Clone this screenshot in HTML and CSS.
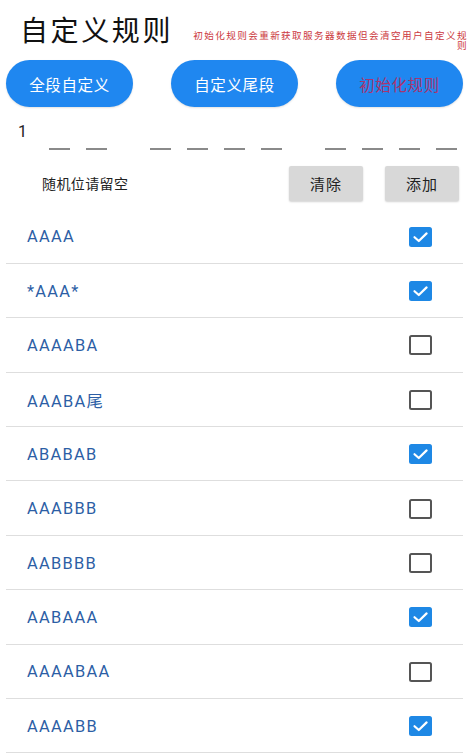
FILE: index.html
```html
<!DOCTYPE html>
<html lang="zh">
<head>
<meta charset="utf-8">
<link rel="stylesheet" href="styles.css">
</head>
<body>
<div class="page">
  <header class="header">
    <h1 class="title">自定义规则</h1>
    <p class="note">初始化规则会重新获取服务器数据但会清空用户自定义规则</p>
  </header>
  <div class="modes">
    <button class="pill">全段自定义</button>
    <button class="pill">自定义尾段</button>
    <button class="pill pill-reset">初始化规则</button>
  </div>
  <div class="digit">1</div>
  <div class="slots">
    <div class="group"><span class="dash"></span><span class="dash"></span></div>
    <div class="group"><span class="dash"></span><span class="dash"></span><span class="dash"></span><span class="dash"></span></div>
    <div class="group"><span class="dash"></span><span class="dash"></span><span class="dash"></span><span class="dash"></span></div>
  </div>
  <div class="actions">
    <span class="hint">随机位请留空</span>
    <div class="action-btns">
      <button class="gray-btn">清除</button>
      <button class="gray-btn">添加</button>
    </div>
  </div>
  <ul class="rules">
    <li class="rule"><span class="rule-name">AAAA</span><span class="box on"><svg viewBox="0 0 23 20" width="23" height="20"><path d="M5.5 10.2 L9.8 14 L17.6 6.4" fill="none" stroke="#fff" stroke-width="2.2" stroke-linecap="round" stroke-linejoin="round"/></svg></span></li>
    <li class="rule"><span class="rule-name">*AAA*</span><span class="box on"><svg viewBox="0 0 23 20" width="23" height="20"><path d="M5.5 10.2 L9.8 14 L17.6 6.4" fill="none" stroke="#fff" stroke-width="2.2" stroke-linecap="round" stroke-linejoin="round"/></svg></span></li>
    <li class="rule"><span class="rule-name">AAAABA</span><span class="box off"></span></li>
    <li class="rule"><span class="rule-name">AAABA尾</span><span class="box off"></span></li>
    <li class="rule"><span class="rule-name">ABABAB</span><span class="box on"><svg viewBox="0 0 23 20" width="23" height="20"><path d="M5.5 10.2 L9.8 14 L17.6 6.4" fill="none" stroke="#fff" stroke-width="2.2" stroke-linecap="round" stroke-linejoin="round"/></svg></span></li>
    <li class="rule"><span class="rule-name">AAABBB</span><span class="box off"></span></li>
    <li class="rule"><span class="rule-name">AABBBB</span><span class="box off"></span></li>
    <li class="rule"><span class="rule-name">AABAAA</span><span class="box on"><svg viewBox="0 0 23 20" width="23" height="20"><path d="M5.5 10.2 L9.8 14 L17.6 6.4" fill="none" stroke="#fff" stroke-width="2.2" stroke-linecap="round" stroke-linejoin="round"/></svg></span></li>
    <li class="rule"><span class="rule-name">AAAABAA</span><span class="box off"></span></li>
    <li class="rule"><span class="rule-name">AAAABB</span><span class="box on"><svg viewBox="0 0 23 20" width="23" height="20"><path d="M5.5 10.2 L9.8 14 L17.6 6.4" fill="none" stroke="#fff" stroke-width="2.2" stroke-linecap="round" stroke-linejoin="round"/></svg></span></li>
  </ul>
</div>
</body>
</html>
```
FILE: styles.css
```css
* { box-sizing: border-box; }
html, body {
  margin: 0;
  padding: 0;
  background: #fff;
}
body {
  font-family: Roboto, "Noto Sans CJK SC", sans-serif;
  color: #222;
  overflow: hidden;
}
.page {
  width: 469px;
  height: 756px;
  overflow: hidden;
}
.header {
  display: flex;
  align-items: flex-start;
  height: 60px;
}
.title {
  margin: 18px 0 0 20px;
  font-size: 28px;
  line-height: 28px;
  font-weight: 400;
  letter-spacing: 2.6px;
  color: #111;
  white-space: nowrap;
}
.note {
  margin: 31px 0 0 18px;
  width: 277px;
  font-size: 9.6px;
  line-height: 10px;
  letter-spacing: 1.4px;
  color: #cc3a3f;
  text-align: right;
}
.modes {
  display: flex;
  justify-content: space-between;
  padding: 0 6px;
  height: 47px;
}
.pill {
  width: 127px;
  height: 47px;
  border: none;
  border-radius: 24px;
  background: #1f87f0;
  color: #fff;
  font-family: Roboto, "Noto Sans CJK SC", sans-serif;
  font-size: 15.5px;
  letter-spacing: 0.6px;
  padding: 0;
  box-shadow: 0 1px 2px rgba(0,0,0,0.12);
}
.pill-reset {
  color: #a8356f;
}
.digit {
  margin: 17px 0 0 18px;
  font-size: 16px;
  line-height: 16px;
  color: #222;
}
.slots {
  display: flex;
  gap: 43px;
  padding: 8px 0 0 49px;
}
.group {
  display: flex;
  gap: 16px;
}
.dash {
  display: block;
  width: 21px;
  height: 1.5px;
  background: #8a8a8a;
}
.actions {
  display: flex;
  align-items: center;
  justify-content: space-between;
  margin-top: 16px;
  padding: 0 10px 0 42px;
  height: 35px;
}
.hint {
  font-size: 14px;
  letter-spacing: 0.4px;
  color: #222;
}
.action-btns {
  display: flex;
  gap: 22px;
}
.gray-btn {
  width: 74px;
  height: 35px;
  border: none;
  border-radius: 2px;
  background: #d8d8d8;
  color: #222;
  font-family: Roboto, "Noto Sans CJK SC", sans-serif;
  font-size: 15px;
  letter-spacing: 1px;
  padding: 0;
  box-shadow: 0 1px 2px rgba(0,0,0,0.18);
}
.rules {
  list-style: none;
  margin: 9px 6px 0 6px;
  padding: 0;
}
.rule {
  display: flex;
  align-items: center;
  justify-content: space-between;
  height: 54.4px;
  border-bottom: 1px solid #dedede;
  padding: 1px 31px 0 21px;
}
.rule-name {
  font-size: 16.4px;
  letter-spacing: 1.3px;
  color: #2c5ea5;
}
.box {
  display: block;
  width: 23px;
  height: 20px;
  border-radius: 2.5px;
}
.box svg { display: block; }
.on {
  background: #1e88e5;
}
.off {
  border: 2px solid #555;
}
```
